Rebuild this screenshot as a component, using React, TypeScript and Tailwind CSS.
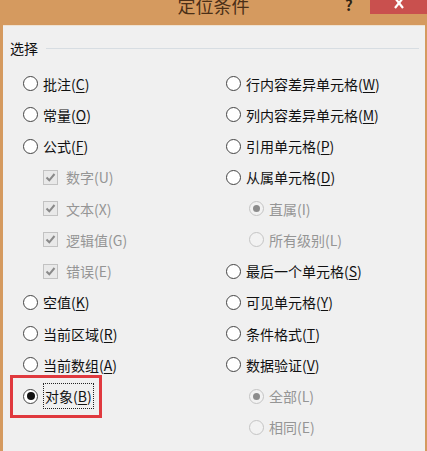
import React from "react";

type Item = {
  label: string;
  key: string;
  kind: "radio" | "check" | "subradio";
  checked?: boolean;
  disabled?: boolean;
  focus?: boolean;
};

const left: Item[] = [
  { label: "批注", key: "C", kind: "radio" },
  { label: "常量", key: "O", kind: "radio" },
  { label: "公式", key: "F", kind: "radio" },
  { label: "数字", key: "U", kind: "check", checked: true, disabled: true },
  { label: "文本", key: "X", kind: "check", checked: true, disabled: true },
  { label: "逻辑值", key: "G", kind: "check", checked: true, disabled: true },
  { label: "错误", key: "E", kind: "check", checked: true, disabled: true },
  { label: "空值", key: "K", kind: "radio" },
  { label: "当前区域", key: "R", kind: "radio" },
  { label: "当前数组", key: "A", kind: "radio" },
  { label: "对象", key: "B", kind: "radio", checked: true, focus: true },
];

const right: Item[] = [
  { label: "行内容差异单元格", key: "W", kind: "radio" },
  { label: "列内容差异单元格", key: "M", kind: "radio" },
  { label: "引用单元格", key: "P", kind: "radio" },
  { label: "从属单元格", key: "D", kind: "radio" },
  { label: "直属", key: "I", kind: "subradio", checked: true, disabled: true },
  { label: "所有级别", key: "L", kind: "subradio", disabled: true },
  { label: "最后一个单元格", key: "S", kind: "radio" },
  { label: "可见单元格", key: "Y", kind: "radio" },
  { label: "条件格式", key: "T", kind: "radio" },
  { label: "数据验证", key: "V", kind: "radio" },
  { label: "全部", key: "L", kind: "subradio", checked: true, disabled: true },
  { label: "相同", key: "E", kind: "subradio", disabled: true },
];

const Radio = ({ checked, disabled }: { checked?: boolean; disabled?: boolean }) => (
  <span
    className={`w-[15px] h-[15px] rounded-full border flex items-center justify-center shrink-0 ${
      disabled ? "border-[#c4c4c4] bg-[#f2f2f2]" : "border-[#444] bg-white"
    }`}
  >
    {checked && (
      <span
        className={`rounded-full ${disabled ? "w-[7px] h-[7px] bg-[#8c8c8c]" : "w-[8px] h-[8px] bg-[#111]"}`}
      />
    )}
  </span>
);

const Check = () => (
  <span className="w-[15px] h-[15px] border border-[#c2c2c2] bg-[#e9e9e9] flex items-center justify-center shrink-0">
    <svg width="11" height="11" viewBox="0 0 11 11">
      <path d="M1.5 5.5 L4.3 8.3 L9.5 2" fill="none" stroke="#8a8a8a" strokeWidth="2" />
    </svg>
  </span>
);

const Row = ({ item }: { item: Item }) => {
  const text = (
    <span className={item.disabled ? "text-[#959595]" : "text-[#111]"}>
      {item.label}(<span className={item.disabled ? "" : "underline underline-offset-2"}>{item.key}</span>)
    </span>
  );
  return (
    <div className="h-[31.25px] flex items-center relative">
      {item.kind === "radio" && <Radio checked={item.checked} disabled={item.disabled} />}
      {item.kind === "check" && (
        <span className="ml-[20px]">
          <Check />
        </span>
      )}
      {item.kind === "subradio" && (
        <span className="ml-[23px]">
          <Radio checked={item.checked} disabled={item.disabled} />
        </span>
      )}
      <span className={item.kind === "check" ? "ml-[8px]" : "ml-[5px]"}>
        {item.focus ? (
          <span className="border border-dotted border-[#222] px-[1px] py-[2px]">{text}</span>
        ) : (
          text
        )}
      </span>
      {item.focus && (
        <div className="absolute left-[-13px] top-[-6px] w-[92px] h-[43px] border-[3px] border-[#e0393e]" />
      )}
    </div>
  );
};

export default function App() {
  return (
    <div
      className="w-[427px] h-[451px] bg-[#d59a5f] overflow-hidden flex flex-col text-[14px] leading-[16px]"
      style={{ fontFamily: '"Noto Sans CJK SC", "Noto Sans", sans-serif' }}
    >
      {/* Title bar */}
      <div className="h-[25px] flex items-start shrink-0">
        <div className="flex-1 pl-[82px] text-center text-[18px] leading-[18px] text-[#4b2f17] -mt-[4px]">
          定位条件
        </div>
        <div className="w-[25px] text-[#2e2214] text-[15px] leading-[14px] font-bold -mt-[2px]">?</div>
        <div className="w-[57px] h-[14px] bg-[#c9504e] flex justify-center">
          <svg width="12" height="10" viewBox="0 0 12 10">
            <path d="M2 -2 L10 8 M10 -2 L2 8" stroke="white" strokeWidth="2.2" />
          </svg>
        </div>
      </div>

      {/* Panel */}
      <div className="flex-1 ml-[3px] mr-[2px] bg-[#f0f0f0] border-t border-[#efe2d2]">
        <div className="flex items-center pl-[7px] pr-[6px] pt-[14px]">
          <span className="text-[#111]">选择</span>
          <div className="flex-1 h-px bg-[#d7dde2] ml-[8px]" />
        </div>
        <div className="grid grid-cols-[203px_1fr] pl-[20px] mt-[12px]">
          <div className="flex flex-col">
            {left.map((it, i) => (
              <Row key={i} item={it} />
            ))}
          </div>
          <div className="flex flex-col">
            {right.map((it, i) => (
              <Row key={i} item={it} />
            ))}
          </div>
        </div>
      </div>
    </div>
  );
}
